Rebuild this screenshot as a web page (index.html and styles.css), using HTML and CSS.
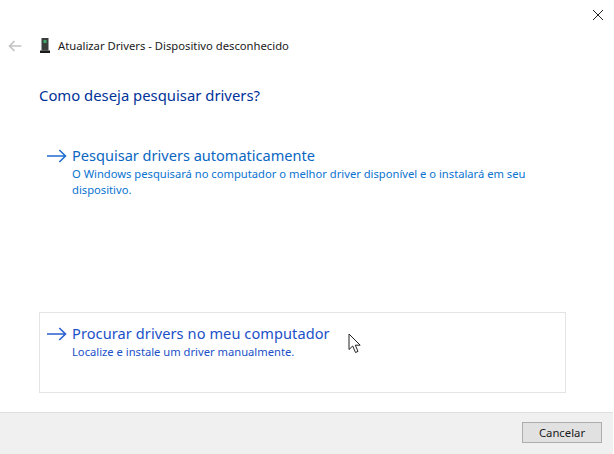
FILE: index.html
```html
<!DOCTYPE html>
<html lang="pt">
<head>
<meta charset="utf-8">
<title>Atualizar Drivers</title>
<link rel="stylesheet" href="styles.css">
</head>
<body>
<div class="window">
  <div class="closebar">
    <svg class="close" width="10" height="10" viewBox="0 0 10 10"><path d="M0 0L10 10M10 0L0 10" stroke="#222" stroke-width="1" fill="none"/></svg>
  </div>
  <div class="titlebar">
    <svg class="back" width="14" height="12" viewBox="0 0 14 12"><path d="M13.5 6H1.5M6.5 1L1.5 6L6.5 11" stroke="#c4c4c4" stroke-width="1.7" fill="none"/></svg>
    <svg class="device" width="10" height="15" viewBox="0 0 10 15"><rect x="1.5" y="0" width="7" height="12.5" fill="#3a3f3c"/><rect x="3.5" y="2" width="3" height="3" fill="#3fa86a"/><rect x="0" y="12.5" width="10" height="2.5" fill="#1a1a1a"/></svg>
    <span class="title">Atualizar Drivers - Dispositivo desconhecido</span>
  </div>
  <main class="content">
    <h1 class="heading">Como deseja pesquisar drivers?</h1>
    <div class="option first">
      <svg class="arrow" width="21" height="14" viewBox="0 0 21 14"><path d="M1 7H19.5M13.3 1L19.5 7L13.3 13" stroke="#1f6fd0" stroke-width="1.6" fill="none"/></svg>
      <div class="option-text">
        <div class="option-title">Pesquisar drivers automaticamente</div>
        <div class="option-desc">O Windows pesquisará no computador o melhor driver disponível e o instalará em seu dispositivo.</div>
      </div>
    </div>
    <div class="option second">
      <svg class="arrow" width="21" height="14" viewBox="0 0 21 14"><path d="M1 7H19.5M13.3 1L19.5 7L13.3 13" stroke="#2a5fd0" stroke-width="1.6" fill="none"/></svg>
      <div class="option-text">
        <div class="option-title hot wide">Procurar drivers no meu computador</div>
        <div class="option-desc hot">Localize e instale um driver manualmente.</div>
      </div>
      <svg class="cursor" width="14" height="21" viewBox="0 0 14 21"><path d="M1 1V16.5L4.7 13L7.5 19.5L10 18.4L7.3 12.2H12.2Z" fill="#fff" stroke="#222" stroke-width="1"/></svg>
    </div>
  </main>
  <footer class="footer">
    <button class="cancel" type="button">Cancelar</button>
  </footer>
</div>
</body>
</html>
```
FILE: styles.css
```css
html, body { margin: 0; padding: 0; background: #fff; }
body { width: 614px; height: 454px; overflow: hidden; font-family: "Noto Sans", "Open Sans", sans-serif; }
.window { width: 613px; height: 454px; display: flex; flex-direction: column; background: #fff; }
.closebar { height: 37px; display: flex; justify-content: flex-end; align-items: flex-start; }
.close { margin: 10px 10px 0 0; }
.titlebar { height: 17px; display: flex; align-items: center; }
.back { margin-left: 8px; }
.device { margin-left: 18px; }
.title { margin-left: 8px; font-size: 11.25px; color: #1a1a1a; white-space: nowrap; }
.content { flex: 1; padding: 0 47px 0 39px; display: flex; flex-direction: column; }
.heading { margin: 29px 0 0; height: 25px; font-size: 14.85px; line-height: 25px; font-weight: 400; color: #003399; white-space: nowrap; }
.option { display: flex; align-items: flex-start; position: relative; box-sizing: border-box; width: 527px; height: 81px; padding: 10px 6px; border: 1px solid transparent; }
.first { margin-top: 26px; }
.second { margin-top: 97px; border-color: #e4e4e4; }
.arrow { margin-top: 4px; flex: none; }
.option-text { margin-left: 5px; width: 470px; }
.option-title { font-size: 14.56px; line-height: 21px; color: #0a66c2; white-space: nowrap; }
.option-desc { font-size: 11.2px; line-height: 16px; color: #0a73d0; }
.hot { color: #2050c8; }
.wide { letter-spacing: 0.09px; }
.cursor { position: absolute; left: 308px; top: 20px; }
.footer { height: 42px; box-sizing: border-box; background: #f0f0f0; border-top: 1px solid #dfdfdf; display: flex; justify-content: flex-end; align-items: flex-start; padding: 9px 11px 0 0; }
.cancel { width: 80px; height: 21px; padding: 0; background: #e1e1e1; border: 1px solid #adadad; font-family: inherit; font-size: 11.3px; line-height: 17px; color: #1a1a1a; }
```
